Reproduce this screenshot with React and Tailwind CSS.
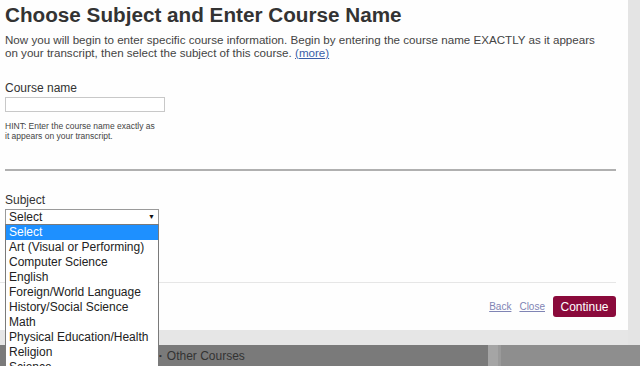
import React from "react";

const subjects = [
  "Select",
  "Art (Visual or Performing)",
  "Computer Science",
  "English",
  "Foreign/World Language",
  "History/Social Science",
  "Math",
  "Physical Education/Health",
  "Religion",
  "Science",
];

function SubjectList() {
  return (
    <div className="absolute left-[5px] top-[224px] w-[154px] border border-[#7a7a7a] bg-white">
      {subjects.map((s, i) => (
        <div
          key={s}
          className={`h-[15px] px-[3px] text-[12px] leading-[15px] whitespace-nowrap ${
            i === 0 ? "bg-[#1e90ff] text-white" : "text-[#222]"
          }`}
        >
          {s}
        </div>
      ))}
    </div>
  );
}

export default function App() {
  return (
    <div className="relative w-[640px] h-[366px] overflow-hidden bg-[#e6e6e6] font-['Liberation_Sans',Arial,sans-serif]">
      <div className="flex h-[345px]">
        <div className="w-[628px] h-[330px] bg-[#fefefe] flex flex-col">
          <div className="px-[5px]">
            <h1 className="pt-[3px] text-[20.7px] leading-[24px] font-bold text-[#333]">
              Choose Subject and Enter Course Name
            </h1>
            <p className="mt-[6px] text-[11.6px] leading-[13px] text-[#444] w-[600px]">
              Now you will begin to enter specific course information. Begin by entering the course name EXACTLY as it appears on your transcript, then select the subject of this course.{" "}
              <a href="#" className="text-[#3a5ea8] underline">
                (more)
              </a>
            </p>
            <div className="mt-[22px] text-[12px] leading-[14px] text-[#333]">Course name</div>
            <div className="mt-[2px] w-[160px] h-[15px] border border-[#c8c8c8] bg-white" />
            <div className="mt-[9px] text-[8.5px] leading-[10px] text-[#444] w-[152px]">
              HINT: Enter the course name exactly as it appears on your transcript.
            </div>
          </div>
          <div className="mt-[28px] ml-[5px] w-[611px] h-[2px] bg-[#b0b0b0]" />
          <div className="px-[5px] mt-[22px]">
            <div className="text-[12px] leading-[14px] text-[#333]">Subject</div>
            <div className="mt-[2px] w-[154px] h-[16px] border border-[#9a9a9a] bg-white flex items-center justify-between px-[3px]">
              <span className="text-[12px] leading-[14px] text-[#222]">Select</span>
              <span className="text-[7px] text-[#111]">▼</span>
            </div>
          </div>
          <div className="mt-auto">
            <div className="w-[616px] h-px bg-[#e6e6e6]" />
            <div className="flex items-center justify-end gap-[8px] pr-[12px] pt-[13px] pb-[13px]">
              <a href="#" className="text-[10px] text-[#7f84b4] underline">Back</a>
              <a href="#" className="text-[10px] text-[#7f84b4] underline">Close</a>
              <button className="w-[63px] h-[21px] rounded-[3px] bg-[#8a0a3b] text-white text-[12px]">
                Continue
              </button>
            </div>
          </div>
        </div>
        <div className="flex-1 bg-[#e4e4e4]" />
      </div>
      <div className="flex h-[21px]">
        <div className="w-[488px] bg-[#7a7a7a] flex items-center pl-[159px] text-[12px] text-[#333]">
          <span className="text-[8px] mr-[5px]">•</span>
          Other Courses
        </div>
        <div className="w-[10px] bg-[#a5a5a5]" />
        <div className="w-[3px] bg-[#9a9a9a]" />
        <div className="flex-1 bg-[#8e8e8e]" />
      </div>
      <SubjectList />
    </div>
  );
}
